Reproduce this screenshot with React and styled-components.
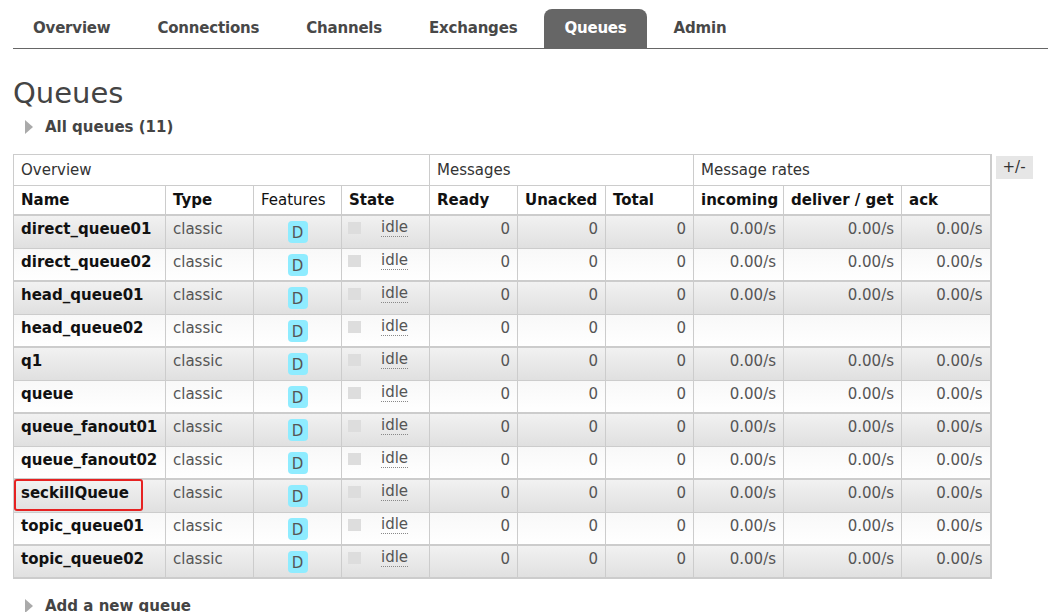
import React from "react";
import styled, { createGlobalStyle } from "styled-components";

const GlobalStyle = createGlobalStyle`
  html, body {
    margin: 0;
    padding: 0;
    background: #fff;
  }
  body {
    font-family: "DejaVu Sans", Verdana, sans-serif;
    font-size: 15px;
    color: #484848;
  }
`;

const Page = styled.div`
  padding: 9px 0 0 13px;
`;

const Nav = styled.ul`
  list-style: none;
  margin: 0;
  padding: 0;
  display: flex;
  gap: 7px;
  border-bottom: 1px solid #666;
  height: 39px;
`;

const Tab = styled.li`
  height: 39px;
  padding: 0 20px 1px;
  display: flex;
  align-items: center;
  font-weight: bold;
  font-size: 15px;
  letter-spacing: -0.2px;
  color: ${(p) => (p.active ? "#fff" : "#484848")};
  background: ${(p) => (p.active ? "#666" : "transparent")};
  border-radius: 8px 8px 0 0;
  box-sizing: border-box;
`;

const Title = styled.h1`
  margin: 26px 0 0 0;
  font-size: 29px;
  font-weight: normal;
  color: #444;
  line-height: 36px;
`;

const Toggle = styled.div`
  display: flex;
  align-items: center;
  gap: 12px;
  margin: ${(p) => p.margin || "0"};
  padding-left: 12px;
  font-weight: bold;
  font-size: 15px;
  color: #444;
  height: 20px;
`;

const Arrow = styled.span`
  width: 0;
  height: 0;
  border-top: 7px solid transparent;
  border-bottom: 7px solid transparent;
  border-left: 8px solid #aaa;
`;

const TableRow = styled.div`
  display: flex;
  align-items: flex-start;
  gap: 4px;
  margin-top: 17px;
`;

const Table = styled.table`
  border-collapse: collapse;
  table-layout: fixed;
  width: 977px;
  border: 1px solid #ccc;
  border-right-width: 2px;
  border-bottom-width: 2px;
`;

const GroupHead = styled.th`
  height: 30px;
  padding: 0 7px;
  border: 1px solid #ccc;
  text-align: left;
  font-weight: normal;
  color: #333;
  background: #fff;
`;

const ColHead = styled.th`
  height: 28px;
  padding: 0 7px;
  border: 1px solid #ccc;
  border-bottom: 2px solid #ccc;
  text-align: left;
  font-weight: ${(p) => (p.plain ? "normal" : "bold")};
  color: #111;
  background: #fff;
  white-space: nowrap;
`;

const Row = styled.tr`
  background: ${(p) =>
    p.alt
      ? "linear-gradient(to bottom, #f2f2f2, #e0e0e0)"
      : "linear-gradient(to bottom, #f8f8f8, #ffffff)"};
`;

const Cell = styled.td`
  position: relative;
  height: 33px;
  box-sizing: border-box;
  padding: 3px 7px 0;
  vertical-align: top;
  border: 1px solid #ccc;
  border-top-width: ${(p) => (p.alt ? "2px" : "1px")};
  text-align: ${(p) => p.align || "left"};
  color: #555;
  white-space: nowrap;
  line-height: 20px;
`;

const NameText = styled.span`
  font-weight: bold;
  color: #111;
`;

const Badge = styled.span`
  display: inline-block;
  width: 20px;
  height: 22px;
  margin-top: 2px;
  border-radius: 4px;
  background: #8fecff;
  color: #555;
  text-align: center;
  line-height: 25px;
`;

const StateWrap = styled.div`
  display: flex;
  align-items: center;
  gap: 20px;
  margin-left: -1px;
`;

const StateBox = styled.span`
  display: inline-block;
  width: 13px;
  height: 12px;
  background: #ddd;
`;

const Idle = styled.span`
  color: #555;
  border-bottom: 1px dotted #888;
  line-height: 17px;
`;

const Highlight = styled.span`
  position: absolute;
  left: 0;
  top: -1px;
  width: 129px;
  height: 32px;
  box-sizing: border-box;
  border: 2px solid #e62222;
  border-radius: 3px;
`;

const ToggleCols = styled.div`
  padding: 3px 7px;
  background: #e6e6e6;
  color: #333;
  font-size: 15px;
  line-height: 17px;
  margin-top: 2px;
`;

const tabs = ["Overview", "Connections", "Channels", "Exchanges", "Queues", "Admin"];

const queues = [
  { name: "direct_queue01", rates: true },
  { name: "direct_queue02", rates: true },
  { name: "head_queue01", rates: true },
  { name: "head_queue02", rates: false },
  { name: "q1", rates: true },
  { name: "queue", rates: true },
  { name: "queue_fanout01", rates: true },
  { name: "queue_fanout02", rates: true },
  { name: "seckillQueue", rates: true, marked: true },
  { name: "topic_queue01", rates: true },
  { name: "topic_queue02", rates: true },
];

const widths = [152, 88, 88, 88, 88, 88, 88, 90, 118, 89];

export default function App() {
  return (
    <Page>
      <GlobalStyle />
      <Nav>
        {tabs.map((t) => (
          <Tab key={t} active={t === "Queues"}>
            {t}
          </Tab>
        ))}
      </Nav>
      <Title>Queues</Title>
      <Toggle margin="6px 0 0 0">
        <Arrow />
        All queues (11)
      </Toggle>
      <TableRow>
        <Table>
          <colgroup>
            {widths.map((w, i) => (
              <col key={i} style={{ width: w }} />
            ))}
          </colgroup>
          <thead>
            <tr>
              <GroupHead colSpan={4}>Overview</GroupHead>
              <GroupHead colSpan={3}>Messages</GroupHead>
              <GroupHead colSpan={3}>Message rates</GroupHead>
            </tr>
            <tr>
              <ColHead>Name</ColHead>
              <ColHead>Type</ColHead>
              <ColHead plain>Features</ColHead>
              <ColHead>State</ColHead>
              <ColHead>Ready</ColHead>
              <ColHead>Unacked</ColHead>
              <ColHead>Total</ColHead>
              <ColHead>incoming</ColHead>
              <ColHead>deliver / get</ColHead>
              <ColHead>ack</ColHead>
            </tr>
          </thead>
          <tbody>
            {queues.map((q, i) => {
              const alt = i % 2 === 0;
              const thick = alt && i > 0;
              return (
                <Row key={q.name} alt={alt}>
                  <Cell alt={thick}>
                    <NameText>{q.name}</NameText>
                    {q.marked && <Highlight />}
                  </Cell>
                  <Cell alt={thick}>classic</Cell>
                  <Cell alt={thick} align="center">
                    <Badge>D</Badge>
                  </Cell>
                  <Cell alt={thick}>
                    <StateWrap>
                      <StateBox />
                      <Idle>idle</Idle>
                    </StateWrap>
                  </Cell>
                  <Cell alt={thick} align="right">0</Cell>
                  <Cell alt={thick} align="right">0</Cell>
                  <Cell alt={thick} align="right">0</Cell>
                  <Cell alt={thick} align="right">{q.rates ? "0.00/s" : ""}</Cell>
                  <Cell alt={thick} align="right">{q.rates ? "0.00/s" : ""}</Cell>
                  <Cell alt={thick} align="right">{q.rates ? "0.00/s" : ""}</Cell>
                </Row>
              );
            })}
          </tbody>
        </Table>
        <ToggleCols>+/-</ToggleCols>
      </TableRow>
      <Toggle margin="17px 0 0 0">
        <Arrow />
        Add a new queue
      </Toggle>
    </Page>
  );
}
